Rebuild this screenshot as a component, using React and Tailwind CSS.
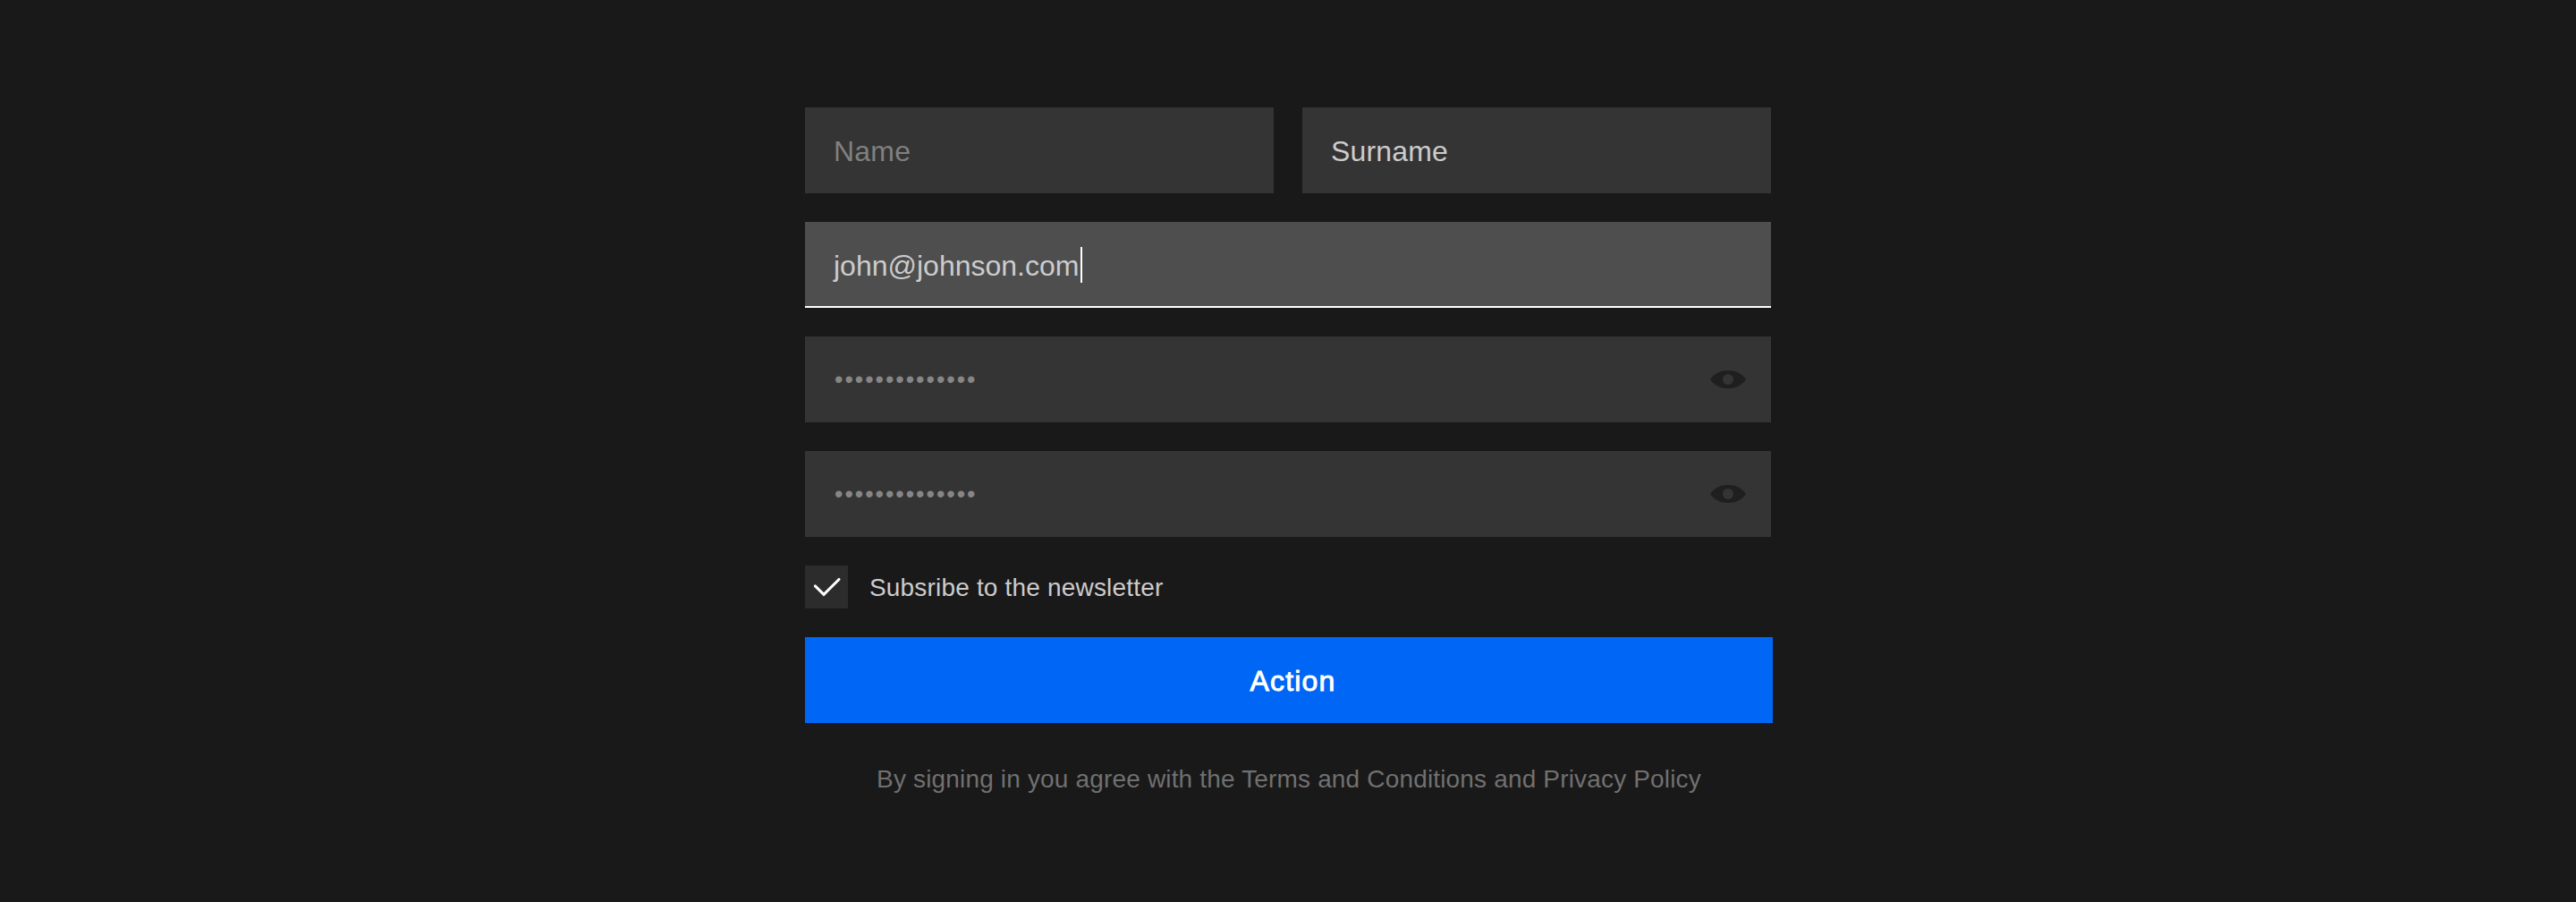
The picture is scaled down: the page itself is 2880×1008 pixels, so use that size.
function EyeIcon() {
  return (
    <svg className="h-5 w-10 shrink-0" viewBox="0 0 40 20">
      <path
        fill="#1f1f1f"
        fillRule="evenodd"
        d="M0 10C5 3.2 11.5 0 20 0s15 3.2 20 10c-5 6.8-11.5 10-20 10S5 16.8 0 10Zm20-6a6 6 0 1 0 0 12 6 6 0 0 0 0-12Z"
      />
    </svg>
  );
}

function PasswordField() {
  return (
    <div className="flex h-24 items-center justify-between bg-[#343434] pr-7 pl-[33px]">
      <span className="text-[27px] leading-10 tracking-[1.935px] text-[#868686]">••••••••••••••</span>
      <EyeIcon />
    </div>
  );
}

export default function App() {
  return (
    <main className="flex h-[1008px] justify-center bg-[#191919] pt-[120px] font-['Liberation_Sans',Arial,sans-serif]">
      <form className="flex w-[1080px] flex-col">
        <div className="flex flex-col gap-8">
          <div className="grid grid-cols-2 gap-8">
            <div className="flex h-24 items-center bg-[#343434] pt-0.5 pl-8 text-[32px] leading-10 tracking-[0.2px] text-[#808080]">
              Name
            </div>
            <div className="flex h-24 items-center bg-[#343434] pt-0.5 pl-8 text-[32px] leading-10 tracking-[0.15px] text-[#cccccc]">
              Surname
            </div>
          </div>

          <div className="flex h-24 items-center border-b-2 border-white bg-[#4e4e4e] pt-1 pl-8 text-[32px] leading-10 text-[#cccccc]">
            <span>john@johnson.com</span>
            <span className="mb-0.5 ml-[1.6px] h-10 w-0.5 shrink-0 bg-white" />
          </div>

          <PasswordField />
          <PasswordField />

          <label className="flex h-12 items-center gap-6">
            <span className="flex size-12 items-center justify-center bg-[#2c2c2c]">
              <svg className="size-12" viewBox="0 0 48 48" fill="none" stroke="#fff" strokeWidth="3.1" strokeLinecap="round">
                <path d="M11.4 22.9 21 32.4 38 15.5" />
              </svg>
            </span>
            <span className="pt-0.5 text-[28px] leading-10 tracking-[0.18px] text-[#cccccc]">Subsribe to the newsletter</span>
          </label>

          <button
            type="button"
            className="h-24 w-[1082px] bg-[#0066f5] pt-0.5 pl-[9px] text-[32px] leading-10 tracking-[1.2px] text-white [-webkit-text-stroke:0.9px_white]"
          >
            Action
          </button>
        </div>

        <p className="mt-[43px] pl-0.5 text-center text-[28px] leading-10 tracking-[0.165px] text-[#707070]">
          By signing in you agree with the Terms and Conditions and Privacy Policy
        </p>
      </form>
    </main>
  );
}
